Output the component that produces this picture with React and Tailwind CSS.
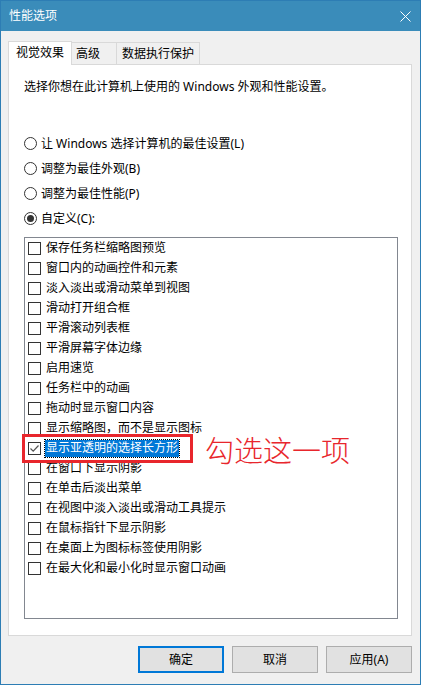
import React from 'react';

const items = [
  { label: '保存任务栏缩略图预览' },
  { label: '窗口内的动画控件和元素' },
  { label: '淡入淡出或滑动菜单到视图' },
  { label: '滑动打开组合框' },
  { label: '平滑滚动列表框' },
  { label: '平滑屏幕字体边缘' },
  { label: '启用速览' },
  { label: '任务栏中的动画' },
  { label: '拖动时显示窗口内容' },
  { label: '显示缩略图，而不是显示图标' },
  { label: '显示亚透明的选择长方形', checked: true, focused: true },
  { label: '在窗口下显示阴影' },
  { label: '在单击后淡出菜单' },
  { label: '在视图中淡入淡出或滑动工具提示' },
  { label: '在鼠标指针下显示阴影' },
  { label: '在桌面上为图标标签使用阴影' },
  { label: '在最大化和最小化时显示窗口动画' },
];

const radios = [
  { label: '让 Windows 选择计算机的最佳设置(L)' },
  { label: '调整为最佳外观(B)' },
  { label: '调整为最佳性能(P)' },
  { label: '自定义(C):', checked: true },
];

const Radio = ({ checked, label }) => (
  <div className="flex items-center h-[25px]">
    <span className="w-[13px] h-[13px] rounded-full border border-[#333] bg-white flex items-center justify-center">
      {checked && <span className="w-[7px] h-[7px] rounded-full bg-[#333]" />}
    </span>
    <span className="ml-[4px]">{label}</span>
  </div>
);

const CheckRow = ({ label, checked, focused }) => (
  <div className="flex items-center h-[20px] pl-[3px]">
    <span className="w-[13px] h-[13px] border border-[#333] bg-white flex items-center justify-center">
      {checked && (
        <svg width="11" height="11" viewBox="0 0 11 11">
          <path d="M1.5 5.5 L4.2 8.2 L9.5 2.5" fill="none" stroke="#555" strokeWidth="1.2" />
        </svg>
      )}
    </span>
    <span
      className={
        focused
          ? 'ml-[4px] px-[1px] h-[17px] leading-[16px] bg-[#0078d7] text-white outline-1 outline-dotted outline-[#000]'
          : 'ml-[5px]'
      }
    >
      {label}
    </span>
  </div>
);

const Button = ({ children, primary }) => (
  <button
    className={
      'w-[86px] h-[27px] bg-[#e1e1e1] text-[12px] text-black ' +
      (primary ? 'border-2 border-[#0078d7]' : 'border border-[#adadad]')
    }
  >
    {children}
  </button>
);

export default function App() {
  return (
    <div
      className="w-[421px] h-[685px] border border-[#2d7db4] bg-[#f0f0f0] flex flex-col relative text-[12px] text-black"
      style={{ fontFamily: '"Noto Sans", "Noto Sans CJK SC", sans-serif' }}
    >
      {/* Title bar */}
      <div className="h-[30px] bg-[#3a8cba] flex items-center justify-between pl-[8px] pr-[9px] text-white">
        <span>性能选项</span>
        <svg width="11" height="11" viewBox="0 0 11 11">
          <path d="M0.5 0.5 L10.5 10.5 M10.5 0.5 L0.5 10.5" stroke="#fff" strokeWidth="1" />
        </svg>
      </div>

      <div className="pl-[7px] pr-[8px] pt-[9px]">
        {/* Tabs */}
        <div className="flex items-end h-[24px]">
          <div className="w-[64px] h-[24px] bg-white border border-[#d9d9d9] border-b-0 flex items-center justify-center relative z-10 -mb-px pb-[1px]">
            视觉效果
          </div>
          <div className="w-[45px] h-[22px] border border-[#d9d9d9] border-l-0 border-b-0 pl-[4px] flex items-center">
            高级
          </div>
          <div className="w-[83px] h-[22px] border border-[#d9d9d9] border-l-0 border-b-0 flex items-center justify-center">
            数据执行保护
          </div>
        </div>

        {/* Panel */}
        <div className="h-[572px] bg-white border border-[#d9d9d9] pl-[15px] pr-[13px]">
          <div className="pt-[13px] h-[41px]">选择你想在此计算机上使用的 Windows 外观和性能设置。</div>
          <div className="pt-[25px]">
            {radios.map((r) => (
              <Radio key={r.label} {...r} />
            ))}
          </div>
          <div className="mt-[6px] h-[382px] border border-[#828790] bg-white">
            {items.map((it) => (
              <CheckRow key={it.label} {...it} />
            ))}
          </div>
        </div>

        {/* Buttons */}
        <div className="flex justify-end gap-[8px] pt-[10px]">
          <Button primary>确定</Button>
          <Button>取消</Button>
          <Button>应用(A)</Button>
        </div>
      </div>

      {/* Annotation overlay */}
      <div className="absolute left-[21px] top-[433px] w-[171px] h-[29px] border-[3px] border-[#e8262c]" />
      <div
        className="absolute left-[204px] top-[430px] text-[29px] leading-[36px] text-[#e8262c] font-light"
        style={{ fontFamily: '"Noto Sans CJK SC", sans-serif' }}
      >
        勾选这一项
      </div>
    </div>
  );
}
